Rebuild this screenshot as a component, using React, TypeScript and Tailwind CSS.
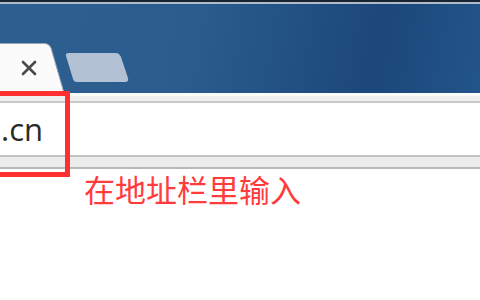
import React from 'react';

/**
 * Onglet actif (forme blanche avec bord incliné)
 */
const ActiveTab: React.FC = () => (
  <div className="relative w-[66px] h-[50px] shrink-0">
    <svg width="66" height="50" viewBox="0 0 66 50" className="absolute inset-0">
      <path d="M-2 0.5 H44 Q49 0.5 51 5 L64 50 H-2 Z" fill="#fbfbfb" stroke="#9aa6b4" strokeWidth="1" />
    </svg>
    <svg width="16" height="16" viewBox="0 0 16 16" className="absolute left-[21px] top-[17px]">
      <path d="M2 2 L14 14 M14 2 L2 14" stroke="#4a4a4a" strokeWidth="2.6" strokeLinecap="round" />
    </svg>
  </div>
);

/**
 * Onglet vide (nouvel onglet)
 */
const NewTab: React.FC = () => (
  <svg width="64" height="30" viewBox="0 0 64 30" className="shrink-0 mb-[10px] -ml-[1px]">
    <path
      d="M1 3 Q0 0 4 0 H51 Q54 0 56 4 L63 25 Q64 29 60 29 H12 Q9 29 8 26 Z"
      fill="#b2c1d3"
    />
  </svg>
);

export default function App() {
  return (
    <div className="relative w-[480px] h-[300px] overflow-hidden bg-white">
      {/* Barre de titre */}
      <div className="h-[93px] flex flex-col bg-[linear-gradient(100deg,#2e5f91_0%,#2a5c8e_40%,#1c477a_78%,#22558a_100%)]">
        <div className="h-[2px] bg-[#1a2430]" />
        <div className="h-[2px] bg-[#aebccb]" />
        <div className="flex-1 flex items-end">
          <ActiveTab />
          <NewTab />
        </div>
      </div>

      {/* Barre d'adresse */}
      <div className="h-[3px] bg-[#fbfbfb]" />
      <div className="h-[7px] bg-[#efefef] border-b-2 border-[#c9c9c9]" />
      <div className="h-[52px] bg-white flex items-center">
        <span className="ml-[1px] text-[31px] leading-none text-[#2a2a2a] font-['Open_Sans','Noto_Sans',sans-serif]">
          .cn
        </span>
      </div>
      <div className="h-[14px] bg-[#ececec] border-t-2 border-b-2 border-t-[#c2c2c2] border-b-[#b8b8b8]" />

      {/* Annotation */}
      <div className="absolute left-[-10px] top-[91px] w-[80px] h-[86px] border-[5px] border-[#ff3030]" />
      <p className="mt-[4px] pl-[84px] text-[31px] leading-none text-[#ff3c3c] font-['Noto_Sans_CJK_SC',sans-serif]">
        在地址栏里输入
      </p>
    </div>
  );
}
